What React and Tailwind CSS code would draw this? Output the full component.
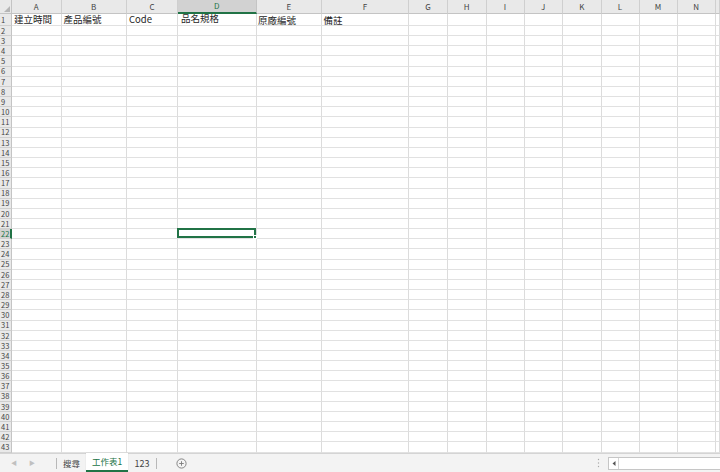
import React from "react";

const cols = ["A", "B", "C", "D", "E", "F", "G", "H", "I", "J", "K", "L", "M", "N", ""];
const row1 = ["建立時間", "產品編號", "Code", "品名規格", "原廠編號", "備註"];
const font = { fontFamily: '"Noto Sans CJK TC", "Liberation Sans", sans-serif' };

export default function App() {
  const rows = Array.from({ length: 43 }, (_, i) => i + 1);
  return (
    <div className="w-[720px] h-[472px] overflow-hidden bg-white flex flex-col" style={font}>
      <div className="grid grid-cols-[12px_49.5px_65.5px_51px_78.5px_65.5px_87px_39px_38.5px_38px_38.5px_38.5px_38px_38px_38.5px_1fr] grid-rows-[14px_12px_repeat(42,10.17px)] h-[453px]">
        {/* corner */}
        <div className="bg-[#e9e9e9] border-r border-b border-[#c4c4c4] flex items-end justify-end p-[1px]">
          <svg width="6" height="6" viewBox="0 0 6 6">
            <polygon points="6,0 6,6 0,6" fill="#b5b5b5" />
          </svg>
        </div>
        {cols.map((c, i) => (
          <div
            key={"h" + i}
            className={
              c === "D"
                ? "bg-[#d2d2d2] border-r border-[#c4c4c4] border-b-2 border-b-[#217346] text-[#217346] text-[8px] flex items-center justify-center leading-none"
                : "bg-[#e9e9e9] border-r border-b border-[#cfcfcf] border-b-[#c4c4c4] text-[#444] text-[8px] flex items-center justify-center leading-none"
            }
          >
            {c}
          </div>
        ))}
        {rows.map((r) => (
          <React.Fragment key={r}>
            <div
              className={
                r === 22
                  ? "bg-[#d2d2d2] border-r-2 border-r-[#217346] border-b border-[#cfcfcf] text-[#217346] text-[7.5px] flex items-center leading-none pl-[1px]"
                  : "bg-[#e9e9e9] border-r border-b border-[#cfcfcf] border-r-[#c4c4c4] text-[#444] text-[7.5px] flex items-center leading-none pl-[1px]"
              }
            >
              {r}
            </div>
            {cols.map((c, i) => (
              <div
                key={c + r + i}
                className="relative border-r border-b border-[#dcdcdc] border-b-[#e1e1e1] flex items-center overflow-visible whitespace-nowrap"
              >
                {r === 1 && row1[i] && (
                  <span
                    className={
                      "text-[9.5px] text-[#1e1e1e] leading-none " +
                      (i === 3 ? "pl-[3px] -mt-[2px]" : i >= 4 ? "pl-[1.5px] mt-[2px]" : "pl-[2px]")
                    }
                  >
                    {row1[i]}
                  </span>
                )}
                {r === 22 && c === "D" && (
                  <div className="absolute -left-[1px] -top-[1px] w-[calc(100%+1px)] h-[calc(100%+1px)] border-2 border-[#217346]">
                    <div className="absolute -right-[3px] -bottom-[3px] w-[4px] h-[4px] bg-[#217346] border border-white" />
                  </div>
                )}
              </div>
            ))}
          </React.Fragment>
        ))}
      </div>

      {/* sheet tab bar */}
      <div className="flex-1 bg-[#f3f3f3] border-t border-[#d4d4d4] flex items-stretch relative">
        <div className="w-[56px] flex items-center">
          <span className="ml-[11px] text-[6px] text-[#c0c0c0] leading-none">◀</span>
          <span className="ml-[12px] text-[6px] text-[#c0c0c0] leading-none">▶</span>
        </div>
        <div className="flex items-stretch">
          <div className="w-px self-center h-[11px] bg-[#b8b8b8]" />
          <div className="w-[29px] flex items-center justify-center text-[8.5px] text-[#444] leading-none">搜尋</div>
          <div className="w-[42px] bg-white border-b-2 border-[#217346] flex items-center justify-center text-[8.5px] text-[#217346] leading-none -mt-px shadow-[0_0_1px_rgba(0,0,0,0.15)]">
            工作表1
          </div>
          <div className="w-[28px] flex items-center justify-center text-[9px] text-[#444] leading-none">123</div>
          <div className="w-px self-center h-[11px] bg-[#b8b8b8]" />
        </div>
        <div className="ml-[19px] flex items-center">
          <svg width="11" height="11" viewBox="0 0 11 11">
            <circle cx="5.5" cy="5.5" r="4.6" fill="none" stroke="#7a7a7a" strokeWidth="0.9" />
            <path d="M5.5 3.2v4.6M3.2 5.5h4.6" stroke="#7a7a7a" strokeWidth="0.9" />
          </svg>
        </div>
        <div className="flex-1" />
        <div className="flex items-center mr-[8px]">
          <svg width="3" height="10" viewBox="0 0 3 10">
            <circle cx="1.5" cy="1.5" r="0.7" fill="#a8a8a8" />
            <circle cx="1.5" cy="5" r="0.7" fill="#a8a8a8" />
            <circle cx="1.5" cy="8.5" r="0.7" fill="#a8a8a8" />
          </svg>
        </div>
        <div className="w-[112px] self-center h-[13px] bg-white border border-[#c6c6c6] border-r-0 flex items-stretch">
          <div className="w-[10px] border-r border-[#d6d6d6] flex items-center justify-center">
            <svg width="4" height="5" viewBox="0 0 4 5">
              <polygon points="3.5,0 3.5,5 0.5,2.5" fill="#555" />
            </svg>
          </div>
        </div>
      </div>
    </div>
  );
}
